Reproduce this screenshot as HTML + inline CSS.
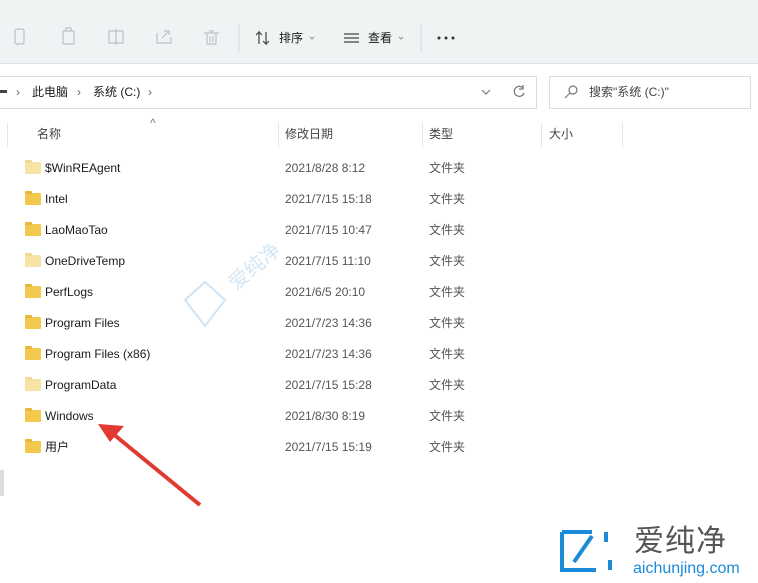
<!DOCTYPE html>
<html><head><meta charset="utf-8"><style>
*{margin:0;padding:0;box-sizing:border-box}
body{width:758px;height:583px;overflow:hidden;background:#fff;font-family:"Liberation Sans","Noto Sans CJK SC",sans-serif;font-size:12px;color:#1a1a1a;position:relative}
.tb{position:absolute;left:0;top:0;width:758px;height:64px;background:#eff3f4;border-bottom:1px solid #dde2e4}
.ab{position:absolute;top:76px;height:33px;border:1px solid #dcdcdc;background:#fff}
.t{position:absolute;white-space:nowrap;line-height:16px}
.row{position:absolute;left:0;width:600px;height:20px;white-space:nowrap;line-height:16px}
.f{position:absolute;left:25px;top:3px;width:16px;height:12px;background:#f2c94c;border-radius:1px}
.f:before{content:"";position:absolute;left:0;top:-2px;width:7px;height:3px;background:#e8b83a;border-radius:1px 1px 0 0}
.f.h{background:#f8e3a6}.f.h:before{background:#f3d995}
.n{position:absolute;left:45px;top:1px;font-size:12px;white-space:nowrap}
.d{position:absolute;left:285px;top:1px;color:#555;white-space:nowrap}
.k{position:absolute;left:429px;top:1px;color:#555;white-space:nowrap}
.hd{position:absolute;top:123px;height:24px;border-left:1px solid #e5e5e5}
</style></head><body>
<div class="tb"></div>
<svg style="position:absolute;left:0;top:0" width="460" height="64" fill="none" stroke="#b8c2c8" stroke-width="1.2">
<rect x="15" y="29" width="9" height="15" rx="2"/><rect x="63" y="31" width="11" height="13" rx="1"/><path d="M66 31v-3h5v3"/>
<rect x="109" y="31" width="14" height="12" rx="1"/><path d="M116 29v16"/>
<path d="M157 33v10h14v-6M162 38l6-6M164 31h5v4"/>
<path d="M204 33h15M207 33v11h9v-11M209 31h5M210 36v6M213 36v6"/>
<path d="M239 24v28" stroke="#d8dee0"/>
<path d="M259 44V32l-3 3M259 32l3 3M266 32v12l-3-3M266 44l3-3" stroke="#444"/>
<path d="M344 34h15M344 38h15M344 42h15" stroke="#444"/>
<path d="M421 24v28" stroke="#d8dee0"/>
<path d="M310 37l2 2 2-2M399 37l2 2 2-2" stroke="#999"/>
</svg>
<div class="t" style="left:279px;top:30px;font-size:12px">排序</div>
<div class="t" style="left:368px;top:30px;font-size:12px">查看</div>
<svg style="position:absolute;left:437px;top:36px" width="20" height="4"><circle cx="2" cy="2" r="1.5" fill="#333"/><circle cx="9" cy="2" r="1.5" fill="#333"/><circle cx="16" cy="2" r="1.5" fill="#333"/></svg>
<div class="ab" style="left:-2px;width:539px"></div>
<div class="ab" style="left:549px;width:202px"></div>
<div style="position:absolute;left:0;top:90px;width:7px;height:3px;background:#444"></div>
<div class="t" style="left:16px;top:84px;color:#666">›</div>
<div class="t" style="left:32px;top:84px">此电脑</div>
<div class="t" style="left:77px;top:84px;color:#666">›</div>
<div class="t" style="left:93px;top:84px">系统 (C:)</div>
<div class="t" style="left:148px;top:84px;color:#666">›</div>
<svg style="position:absolute;left:478px;top:82px" width="50" height="20" fill="none" stroke="#777" stroke-width="1.2"><path d="M4 8l4 4 4-4"/><path d="M45 6a5 5 0 1 0 1 5M45 3v4h-4"/></svg>
<svg style="position:absolute;left:562px;top:83px" width="18" height="18" fill="none" stroke="#777" stroke-width="1.2"><circle cx="11" cy="7" r="4"/><path d="M8 10l-5 5"/></svg>
<div class="t" style="left:589px;top:84px;color:#444">搜索"系统 (C:)"</div>
<div class="t" style="left:150px;top:115px;color:#777">^</div>
<div class="hd" style="left:7px"></div>
<div class="hd" style="left:278px"></div>
<div class="hd" style="left:422px"></div>
<div class="hd" style="left:541px"></div>
<div class="hd" style="left:622px"></div>
<div class="t" style="left:37px;top:126px;color:#444">名称</div>
<div class="t" style="left:285px;top:126px;color:#444">修改日期</div>
<div class="t" style="left:429px;top:126px;color:#444">类型</div>
<div class="t" style="left:549px;top:126px;color:#444">大小</div>
<div class="row" style="top:159px"><div class="f h"></div><div class="n">$WinREAgent</div><div class="d">2021/8/28 8:12</div><div class="k">文件夹</div></div>
<div class="row" style="top:190px"><div class="f"></div><div class="n">Intel</div><div class="d">2021/7/15 15:18</div><div class="k">文件夹</div></div>
<div class="row" style="top:221px"><div class="f"></div><div class="n">LaoMaoTao</div><div class="d">2021/7/15 10:47</div><div class="k">文件夹</div></div>
<div class="row" style="top:252px"><div class="f h"></div><div class="n">OneDriveTemp</div><div class="d">2021/7/15 11:10</div><div class="k">文件夹</div></div>
<div class="row" style="top:283px"><div class="f"></div><div class="n">PerfLogs</div><div class="d">2021/6/5 20:10</div><div class="k">文件夹</div></div>
<div class="row" style="top:314px"><div class="f"></div><div class="n">Program Files</div><div class="d">2021/7/23 14:36</div><div class="k">文件夹</div></div>
<div class="row" style="top:345px"><div class="f"></div><div class="n">Program Files (x86)</div><div class="d">2021/7/23 14:36</div><div class="k">文件夹</div></div>
<div class="row" style="top:376px"><div class="f h"></div><div class="n">ProgramData</div><div class="d">2021/7/15 15:28</div><div class="k">文件夹</div></div>
<div class="row" style="top:407px"><div class="f"></div><div class="n">Windows</div><div class="d">2021/8/30 8:19</div><div class="k">文件夹</div></div>
<div class="row" style="top:438px"><div class="f"></div><div class="n">用户</div><div class="d">2021/7/15 15:19</div><div class="k">文件夹</div></div>
<div style="position:absolute;left:0;top:470px;width:4px;height:26px;background:#ddd"></div>
<svg style="position:absolute;left:0;top:0" width="758" height="583">
<path d="M200 505L112 433" stroke="#e03a32" stroke-width="4"/>
<path d="M98 424l26 2-14 16z" fill="#e03a32"/>
<path d="M185 300l20-18 20 18-20 26z" fill="none" stroke="#cfe4f5" stroke-width="2"/>
<path d="M562 532h30M562 532v38h34M606 532v10M610 560v10M574 562l18-26" fill="none" stroke="#1b8ad8" stroke-width="4"/>
</svg>
<div class="t" style="left:225px;top:255px;color:#d5e7f4;font-size:20px;line-height:24px;transform:rotate(-40deg)">爱纯净</div>
<div class="t" style="left:634px;top:524px;font-size:30px;color:#555;letter-spacing:1px;line-height:36px">爱纯净</div>
<div class="t" style="left:633px;top:559px;font-size:16px;color:#1b8ad8;line-height:20px">aichunjing.com</div>
</body></html>
